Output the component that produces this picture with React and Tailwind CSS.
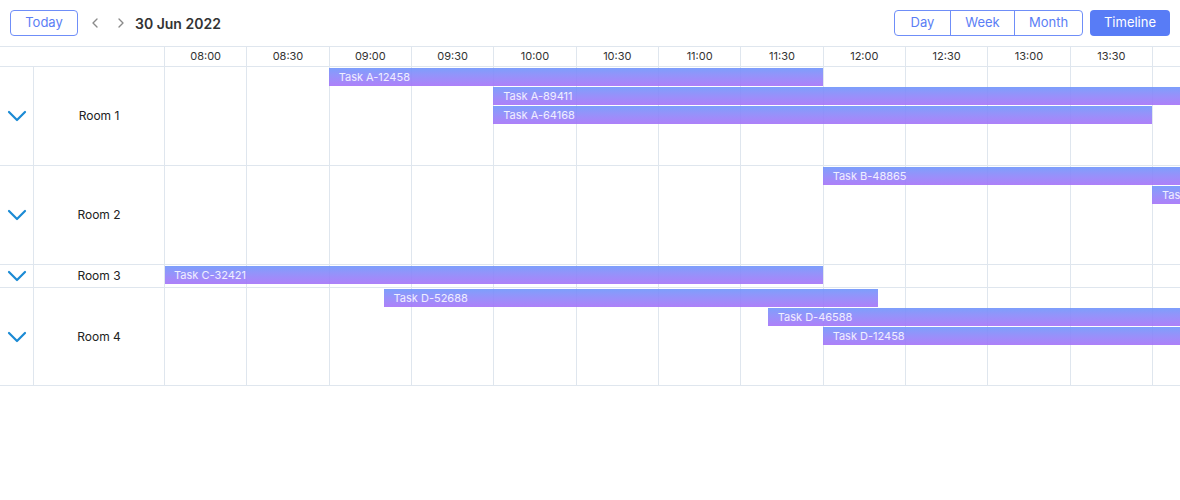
import { ChevronLeft, ChevronRight } from 'lucide-react';

const SLOT = 82.33;
const times = ['08:00', '08:30', '09:00', '09:30', '10:00', '10:30', '11:00', '11:30', '12:00', '12:30', '13:00', '13:30', '', ''];

const toX = (t) => {
  const [h, m] = t.split(':').map(Number);
  return ((h - 8) * 60 + m) / 30 * SLOT;
};

const rooms = [
  {
    name: 'Room 1', height: 'h-[99px]',
    tasks: [
      { label: 'Task A-12458', start: '09:00', end: '12:00' },
      { label: 'Task A-89411', start: '10:00', end: '15:00' },
      { label: 'Task A-64168', start: '10:00', end: '14:00' },
    ],
  },
  {
    name: 'Room 2', height: 'h-[99px]',
    tasks: [
      { label: 'Task B-48865', start: '12:00', end: '15:00' },
      { label: 'Task B-10592', start: '14:00', end: '15:00' },
    ],
  },
  {
    name: 'Room 3', height: 'h-[23px]',
    tasks: [{ label: 'Task C-32421', start: '08:00', end: '12:00' }],
  },
  {
    name: 'Room 4', height: 'h-[98px]',
    tasks: [
      { label: 'Task D-52688', start: '09:20', end: '12:20' },
      { label: 'Task D-46588', start: '11:40', end: '15:00' },
      { label: 'Task D-12458', start: '12:00', end: '15:00' },
    ],
  },
];

function Chevron() {
  return (
    <svg width="20" height="12" viewBox="0 0 20 12" fill="none">
      <path d="M2 2l8 8 8-8" stroke="#1a8ad4" strokeWidth="2.2" strokeLinecap="round" strokeLinejoin="round" />
    </svg>
  );
}

function RoomRow({ room }) {
  return (
    <div className={`flex border-b border-[#dfe6ee] ${room.height}`}>
      <div className="w-[34px] shrink-0 border-r border-[#dfe6ee] flex items-center justify-center">
        <Chevron />
      </div>
      <div className="w-[131px] shrink-0 border-r border-[#dfe6ee] flex items-center justify-center text-[12px] text-[#222]">
        {room.name}
      </div>
      <div className="relative flex flex-1 overflow-hidden">
        {times.map((t, i) => (
          <div key={i} className="w-[82.33px] shrink-0 border-r border-[#dfe6ee]" />
        ))}
        {room.tasks.map((task, i) => (
          <div
            key={task.label}
            className="absolute h-[18px] flex items-center pl-[10px] text-[11px] text-white/85 bg-gradient-to-b from-[#6e94fb]/90 to-[#a472f8]/90 whitespace-nowrap overflow-hidden"
            style={{ left: toX(task.start) - 1, width: toX(task.end) - toX(task.start), top: 1 + i * 19 }}
          >
            {task.label}
          </div>
        ))}
      </div>
    </div>
  );
}

export default function App() {
  return (
    <div className="w-[1180px] h-[500px] bg-white overflow-hidden font-['Inter',sans-serif]">
      <div className="h-[46px] flex items-center justify-between px-[10px]">
        <div className="flex items-center">
          <button className="w-[68px] h-[26px] border border-[#6f8ef8] rounded-[4px] text-[13px] text-[#5b7ef5]">Today</button>
          <ChevronLeft className="ml-[9px] w-[16px] h-[16px] text-[#8a8a8a]" strokeWidth={2} />
          <ChevronRight className="ml-[10px] w-[16px] h-[16px] text-[#8a8a8a]" strokeWidth={2} />
          <span className="ml-[6px] text-[14px] font-semibold text-[#333]">30 Jun 2022</span>
        </div>
        <div className="flex items-center">
          <div className="flex h-[26px] border border-[#6f8ef8] rounded-[4px] text-[13px] text-[#5b7ef5]">
            <button className="w-[55px]">Day</button>
            <button className="w-[64px] border-l border-[#6f8ef8]">Week</button>
            <button className="w-[68px] border-l border-[#6f8ef8]">Month</button>
          </div>
          <button className="ml-[7px] w-[80px] h-[26px] rounded-[4px] bg-[#587cf6] text-white text-[13px]">Timeline</button>
        </div>
      </div>
      <div className="border-t border-[#dfe6ee]">
        <div className="flex h-[20px] border-b border-[#dfe6ee]">
          <div className="w-[165px] shrink-0 border-r border-[#dfe6ee]" />
          <div className="flex flex-1 overflow-hidden">
            {times.map((t, i) => (
              <div key={i} className="w-[82.33px] shrink-0 border-r border-[#dfe6ee] flex items-center justify-center text-[11px] text-[#333]">
                {t}
              </div>
            ))}
          </div>
        </div>
        {rooms.map((room) => (
          <RoomRow key={room.name} room={room} />
        ))}
      </div>
    </div>
  );
}
